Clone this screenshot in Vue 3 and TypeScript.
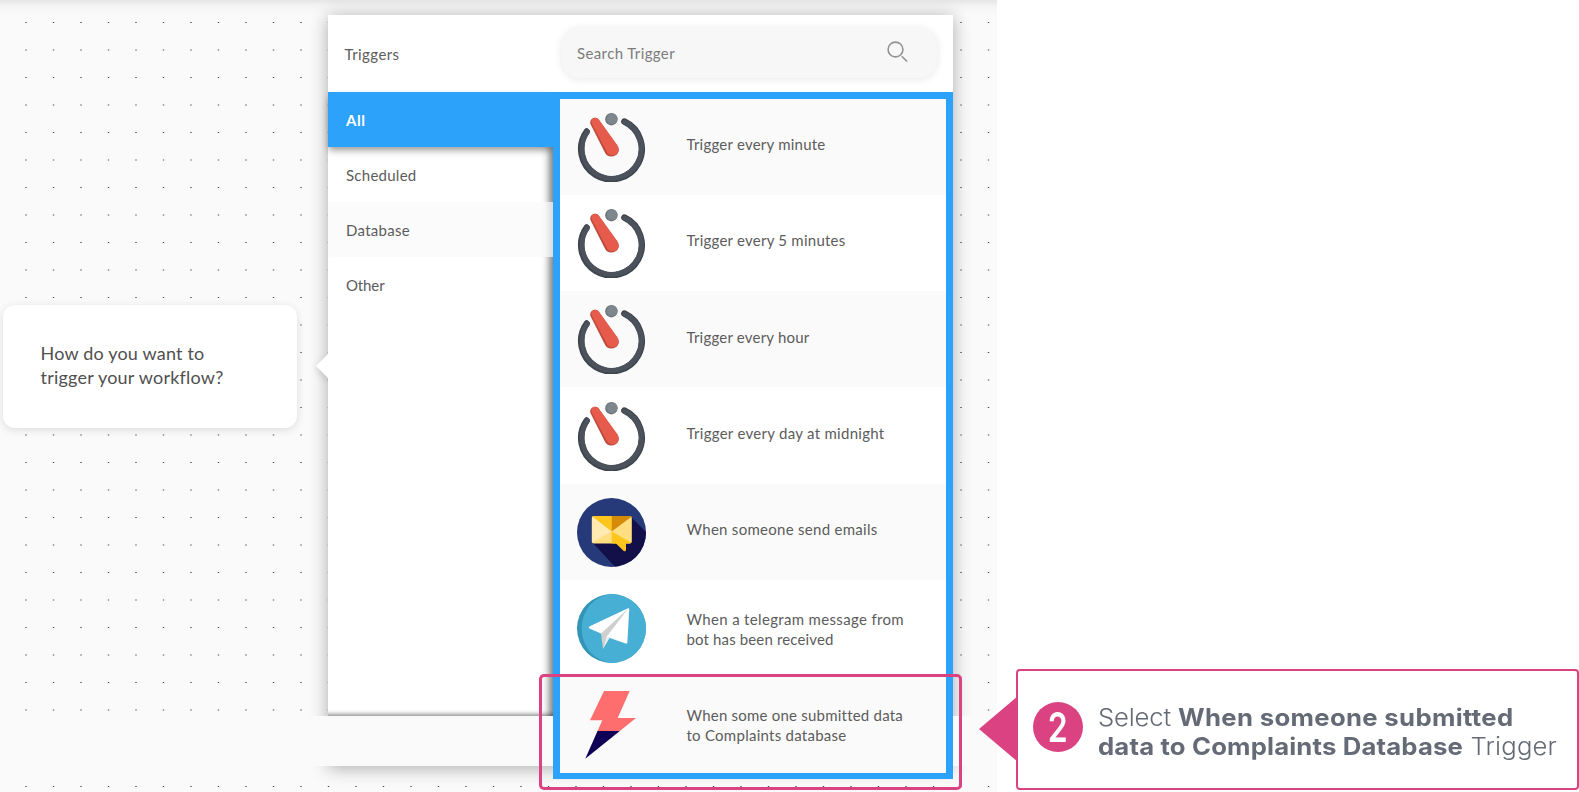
<script setup lang="ts">
import type { Directive } from 'vue'

interface Trigger {
  icon: 'timer' | 'mail' | 'telegram' | 'bolt'
  lines: { text: string; width: number }[]
}

const categories = [
  { text: 'All', width: 19.5, active: true, shaded: false },
  { text: 'Scheduled', width: 70.5, active: false, shaded: false },
  { text: 'Database', width: 64, active: false, shaded: true },
  { text: 'Other', width: 38.5, active: false, shaded: false },
]

const triggers: Trigger[] = [
  { icon: 'timer', lines: [{ text: 'Trigger every minute', width: 139 }] },
  { icon: 'timer', lines: [{ text: 'Trigger every 5 minutes', width: 159 }] },
  { icon: 'timer', lines: [{ text: 'Trigger every hour', width: 123 }] },
  { icon: 'timer', lines: [{ text: 'Trigger every day at midnight', width: 198 }] },
  { icon: 'mail', lines: [{ text: 'When someone send emails', width: 191 }] },
  {
    icon: 'telegram',
    lines: [
      { text: 'When a telegram message from', width: 217.5 },
      { text: 'bot has been received', width: 147 },
    ],
  },
  {
    icon: 'bolt',
    lines: [
      { text: 'When some one submitted data', width: 216 },
      { text: 'to Complaints database', width: 160 },
    ],
  },
]

// Dot grid: 27.5px pitch behind the panel, plus the row under it.
const rowTops = [...Array.from({ length: 26 }, (_, i) => 22 + i * 27.5), 786]
const dots = rowTops
  .flatMap((y) => Array.from({ length: 36 }, (_, i) => `M${25.3 + i * 27.5} ${y}h1.4v1h-1.4z`))
  .join('')

// Tracks a line of text so that it fills the given width on screen.
const vFit: Directive<HTMLElement, number> = {
  mounted(el, { value }) {
    const count = (el.textContent ?? '').length
    const natural = el.getBoundingClientRect().width
    const scale = natural / el.offsetWidth
    el.style.letterSpacing = `${(value - natural) / count / scale}px`
  },
}
</script>

<template>
  <main class="page">
    <section class="canvas">
      <svg class="dots" width="997" height="792"><path :d="dots" fill="#4a4a4a" /></svg>
      <div class="bubble">
        <div><span v-fit="164">How do you want to</span></div>
        <div><span v-fit="183">trigger your workflow?</span></div>
      </div>

      <div class="panel">
        <svg class="pointer" width="13" height="26"><path d="M0 13 13 0v26z" fill="#fff" /></svg>
        <header class="head">
          <div class="title"><span v-fit="55">Triggers</span></div>
          <div class="search">
            <span v-fit="98">Search Trigger</span>
            <svg width="22" height="22" fill="none" stroke="#929292" stroke-width="1.6">
              <circle cx="8.5" cy="8.5" r="7.4" />
              <path d="M14.7 15.2l5.4 5.3" />
            </svg>
          </div>
        </header>
        <div class="body">
          <nav class="menu">
            <div
              v-for="c in categories"
              :key="c.text"
              class="item"
              :class="{ active: c.active, shaded: c.shaded }"
            >
              <span v-fit="c.width">{{ c.text }}</span>
            </div>
          </nav>
          <div class="list">
            <div v-for="(t, i) in triggers" :key="i" class="row">
              <svg v-if="t.icon === 'timer'" class="icon" viewBox="0 0 69 69">
                <path d="M47.3 8.5A30.3 30.3 0 1 1 9.7 18.5" fill="none" stroke="#3d434b" stroke-width="6.4" stroke-linecap="round" />
                <path d="M47.8 9A29.7 29.7 0 1 1 10.3 18.8" fill="none" stroke="#4b525b" stroke-width="5" stroke-linecap="round" />
                <circle cx="34.4" cy="6.2" r="6.2" fill="#6b7379" />
                <circle cx="35" cy="5.8" r="5.4" fill="#7e878d" />
                <path d="M13.7 11.5C12 8 15 4.8 18 4.8c2 0 3.4 1 4.4 2.8l18 25c3.6 5.8-.3 11-6 11-3.2 0-5.3-1.5-6.5-4z" fill="#bd4b3d" />
                <path d="M14.8 10.5C13.5 7.5 15.5 4.8 18 4.8c2 0 3.4 1 4.4 2.8l18 25c3.2 5.2 0 9.7-4.8 9.7-3 0-4.9-1.3-6-3.8z" fill="#e65b4b" />
              </svg>
              <svg v-else-if="t.icon === 'mail'" class="icon" viewBox="0 0 69 69">
                <clipPath id="disc"><circle cx="34.5" cy="34.5" r="34.5" /></clipPath>
                <circle cx="34.5" cy="34.5" r="34.5" fill="#263a7a" />
                <path clip-path="url(#disc)" d="M54 19l17 17v35H40L16 45z" fill="#120f49" />
                <rect x="14.8" y="18" width="40" height="27.5" rx="2" fill="#ffdf82" />
                <path d="M15.2 18.8v26L34.7 33z" fill="#ffeab1" />
                <path d="M15.5 18.5q.5-.5 1.5-.5h17.700v15.5z" fill="#fec51d" />
                <path d="M34.7 18h18.5q1 0 1.3.8L34.7 33.5z" fill="#d58b08" />
                <path d="M34.7 33.5l19.500 11-1.200 1h-4v6q0 2.800-2.500 1.300l-7.500-7.300h-4.300z" fill="#fec51d" />
              </svg>
              <svg v-else-if="t.icon === 'telegram'" class="icon" viewBox="0 0 69 69">
                <circle cx="34.5" cy="34.5" r="34.5" fill="#3295b7" />
                <path d="M34.5 0A34.5 34.5 0 0 1 34.5 69C17 67 4.800 53 4.800 34.500S17 2 34.500 0z" fill="#48afd4" />
                <path d="M12.300 32.500 51 14.300q1.200-.4 1.200 1l-1.800 33.300q-.2 1.600-1.700 1L30 43l-6-3.500-11.600-5q-1.200-1 0-2z" fill="#fff" />
                <path d="M51 14.800 24 39.500 26 55l3.800-12.500z" fill="#cfcfcf" />
                <path d="M26 55l3.500-12.500 3.200 1.300z" fill="#eee" />
              </svg>
              <svg v-else class="icon" viewBox="0 0 69 69">
                <path d="M27 1h25.700l-12 27H59L42.800 41H20.500l4.800-10.700H13z" fill="#ff6e6e" />
                <path d="M20.500 41h22.300L8.300 68.700z" fill="#100055" />
              </svg>
              <div class="label" :class="{ single: t.lines.length === 1 }">
                <div v-for="l in t.lines" :key="l.text"><span v-fit="l.width">{{ l.text }}</span></div>
              </div>
            </div>
          </div>
        </div>
      </div>
    </section>

    <div class="highlight" />
    <aside class="callout">
      <svg class="arrow" width="40" height="66"><path d="M0 33 39 0v66z" fill="#db4281" /></svg>
      <div class="step"><span>2</span></div>
      <div class="copy">
        <div><span v-fit="80">Select </span><b v-fit="335.5">When someone submitted</b></div>
        <div><b v-fit="365">data to Complaints Database</b><span v-fit="94"> Trigger</span></div>
      </div>
    </aside>
  </main>
</template>

<style>
body {
  margin: 0;
  overflow: hidden;
}
</style>

<style scoped>
.page {
  position: relative;
  width: 1579px;
  height: 792px;
  overflow: hidden;
  background: #fff;
  color: #5c5c5c;
  font: 15px/20px Lato, 'Open Sans', sans-serif;
}
span,
b {
  display: inline-block;
  white-space: pre;
}
.canvas {
  position: relative;
  display: flex;
  align-items: flex-start;
  box-sizing: border-box;
  width: 997px;
  height: 792px;
  padding-left: 3px;
  overflow: hidden;
  background: linear-gradient(#e5e5e5, #f4f4f4 6px, #fafafa 14px);
}
.dots {
  position: absolute;
  inset: 0;
}
.bubble {
  position: relative;
  box-sizing: border-box;
  width: 294px;
  height: 123px;
  margin-top: 305px;
  padding: 36px 37.500px;
  border-radius: 12px;
  background: #fff;
  box-shadow: 0 2px 9px rgba(0, 0, 0, 0.12);
  color: #505050;
  font-size: 18px;
  line-height: 24px;
}
.panel {
  position: relative;
  width: 625px;
  height: 751px;
  margin: 15px 0 0 31px;
  background: #fafafa;
  box-shadow: 0 2px 17px rgba(0, 0, 0, 0.32);
}
.panel::before {
  content: '';
  position: absolute;
  top: 701px;
  bottom: 0;
  left: -18px;
  right: -18px;
  background: #fafafa;
}
.pointer {
  position: absolute;
  left: -12px;
  top: 338px;
  filter: drop-shadow(-1px 3px 3px rgba(0, 0, 0, 0.12));
}
.head {
  position: relative;
  display: flex;
  align-items: center;
  height: 76.500px;
  background: #fff;
}
.title {
  width: 217.500px;
  padding: 2px 0 0 16.500px;
}
.search {
  display: flex;
  justify-content: space-between;
  box-sizing: border-box;
  width: 375px;
  height: 50px;
  padding: 15px 28.500px 0 15px;
  border-radius: 18px;
  background: #f7f7f7;
  box-shadow: 0 1px 9px rgba(0, 0, 0, 0.1);
  color: #7c7c7c;
}
.search svg {
  margin-top: -2.500px;
}
.body {
  position: relative;
  display: grid;
  grid-template-columns: 225px 400px;
  grid-template-rows: 624px;
  height: 624px;
  background: #fff;
}
.menu {
  display: flex;
  flex-direction: column;
  position: relative;
  box-shadow:
    inset -9px 0 7px -5px rgba(0, 0, 0, 0.5),
    inset 0 -6px 4px -4px rgba(0, 0, 0, 0.4);
}
.item {
  display: flex;
  align-items: center;
  box-sizing: border-box;
  height: 55px;
  padding: 1px 0 0 18px;
}
.active {
  position: relative;
  background: #2ca2fa;
  box-shadow: 0 4px 7px -1px rgba(0, 0, 0, 0.42);
  color: #fff;
  font-weight: 700;
}
.shaded {
  background: rgba(249, 249, 249, 0.72);
}
.list {
  position: relative;
  box-sizing: border-box;
  height: 687.500px;
  border: solid #2ca2fa;
  border-width: 7px 7px 6px;
  background: #fff;
}
.row {
  display: flex;
  align-items: center;
  box-sizing: border-box;
  height: 96.300px;
  padding: 1px 0 0 17px;
}
.row:nth-child(odd) {
  background: #fafafa;
}
.icon {
  flex: none;
  width: 69px;
  height: 69px;
  margin-right: 40.500px;
}
.label.single {
  position: relative;
  top: -3px;
}
.highlight {
  position: absolute;
  left: 539px;
  top: 674px;
  box-sizing: border-box;
  width: 423px;
  height: 116px;
  border: 3px solid #db4281;
  border-radius: 5px;
}
.callout {
  position: absolute;
  left: 1016px;
  top: 669px;
  display: flex;
  align-items: flex-start;
  box-sizing: border-box;
  width: 563px;
  height: 121px;
  padding: 31px 0 0 15px;
  border: 2px solid #db4281;
  border-radius: 4px;
  background: #fff;
  color: #656b76;
}
.arrow {
  position: absolute;
  left: -39px;
  top: 25px;
}
.step {
  display: flex;
  align-items: center;
  justify-content: center;
  flex: none;
  width: 50px;
  height: 50px;
  margin-right: 15px;
  border-radius: 50%;
  background: #db4281;
  color: #fff;
  font: 600 41px/50px Inter, sans-serif;
}
.step span {
  transform: scaleX(0.78);
}
.copy {
  padding-top: 1px;
  font: 300 24px/29px Inter, sans-serif;
  white-space: nowrap;
  transform: scaleX(1.07);
  transform-origin: left;
}
.copy b {
  font-weight: 700;
}
</style>
